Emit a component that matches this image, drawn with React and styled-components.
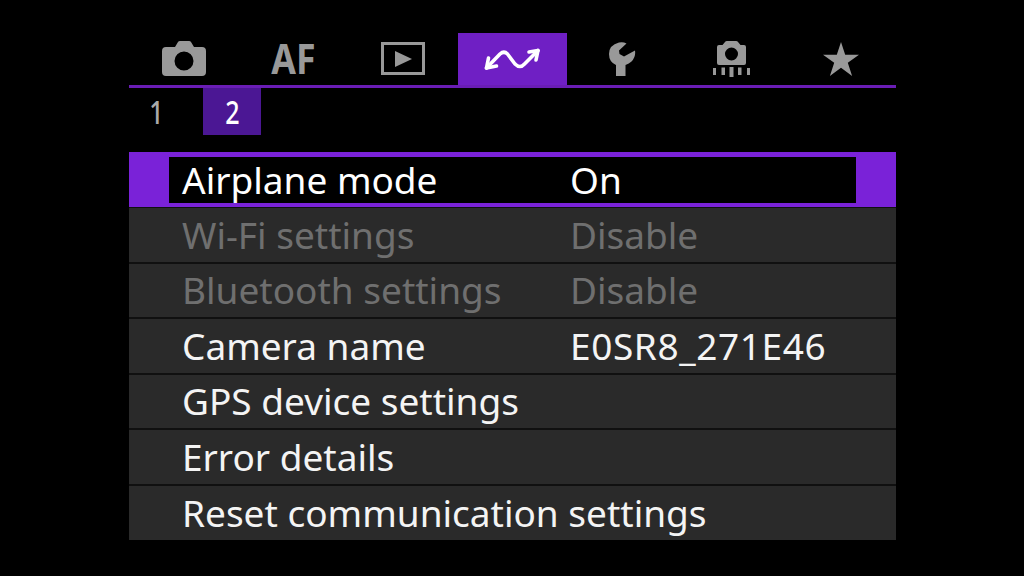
import React from 'react';
import styled, { createGlobalStyle } from 'styled-components';

const Global = createGlobalStyle`
  html, body { margin: 0; padding: 0; background: #000; }
`;

const Screen = styled.div`
  width: 1024px;
  height: 576px;
  overflow: hidden;
  background: #000;
  box-sizing: border-box;
  padding: 33px 128px 0 129px;
  font-family: "Noto Sans", sans-serif;
`;

const TabBar = styled.div`
  display: grid;
  grid-template-columns: repeat(7, 1fr);
  height: 55px;
  border-bottom: 3px solid #6a1db5;
  box-sizing: border-box;
`;

const Tab = styled.div`
  display: flex;
  align-items: flex-start;
  justify-content: center;
  height: 52px;
  background: ${p => (p.$active ? '#6f1fc4' : 'transparent')};
  color: ${p => (p.$active ? '#fff' : '#999')};
`;

const AfLabel = styled.span`
  display: block;
  font-weight: 700;
  font-size: 41px;
  line-height: 50px;
  transform: scaleX(0.87);
`;

const SubTabs = styled.div`
  display: flex;
  gap: 20px;
  height: 47px;
  margin-bottom: 17px;
`;

const SubTab = styled.div`
  width: ${p => p.$width}px;
  display: flex;
  align-items: center;
  justify-content: center;
  background: ${p => (p.$active ? '#4b1794' : 'transparent')};
  color: ${p => (p.$active ? '#fff' : '#aaa')};
  font-size: 33px;
  font-weight: 500;
`;

const Digit = styled.span`
  display: block;
  transform: scaleX(0.76);
  line-height: 47px;
`;

const List = styled.div`
  display: flex;
  flex-direction: column;
  background: #101010;
`;

const Row = styled.div`
  height: 53.5px;
  margin-bottom: 2px;
  background: #2a2a2a;
  box-sizing: border-box;
  padding-left: 53px;
  display: grid;
  grid-template-columns: 388px 1fr;
  align-items: center;
  color: ${p => (p.$disabled ? '#6f6f6f' : '#f4f4f4')};
  font-size: 37px;
  line-height: 50px;
  &:last-child {
    height: 54.5px;
    margin-bottom: 0;
  }
`;

const SelectedRow = styled.div`
  height: 55px;
  margin-bottom: 1px;
  background: #7a22d8;
  box-sizing: border-box;
  padding: 5px 40px 4px;
  display: flex;
`;

const SelectedInner = styled.div`
  flex: 1;
  background: #000;
  box-sizing: border-box;
  padding-left: 13px;
  display: grid;
  grid-template-columns: 388px 1fr;
  align-items: center;
  color: #fff;
  font-size: 37px;
  line-height: 46px;
`;

const Text = styled.span`
  white-space: nowrap;
  letter-spacing: ${p => (p.$wide ? '0.6px' : '0')};
`;

const Icon = styled.svg`
  display: block;
  margin-top: ${p => p.$top}px;
  fill: currentColor;
`;

const StrokeIcon = styled.svg`
  display: block;
  margin-top: ${p => p.$top}px;
  fill: none;
  stroke: currentColor;
  stroke-width: 3.6;
  stroke-linecap: round;
  stroke-linejoin: round;
`;

const CameraIcon = () => (
  <Icon $top={8} width="44" height="35" viewBox="0 0 44 35">
    <path fillRule="evenodd" d="M13 6 L16 1 Q16.500 0 18 0 H27 Q28.500 0 29 1 L32 6 H40 Q44 6 44 10 V31 Q44 35 40 35 H4 Q0 35 0 31 V10 Q0 6 4 6 Z M22 10.500 A9.500 9.500 0 1 0 22 29.500 A9.500 9.500 0 1 0 22 10.500 Z" />
  </Icon>
);

const PlayIcon = () => (
  <Icon $top={9} width="44" height="33" viewBox="0 0 44 33">
    <path fillRule="evenodd" d="M0 0 H44 V33 H0 Z M3 3 V30 H41 V3 Z" />
    <path d="M14 9 L31 17 L14 25 Z" />
  </Icon>
);

const CommIcon = () => (
  <StrokeIcon $top={14} width="56" height="24" viewBox="0 0 56 24">
    <path d="M2.500 21 L16 7 Q20 3.500 23.500 7 L31 17 Q36 22 40.500 17 L54 3.500" />
    <path d="M4.500 11 L2.500 21 L12.500 19" />
    <path d="M45 5 L54 3.500 L52 13" />
  </StrokeIcon>
);

const WrenchIcon = () => (
  <Icon $top={9} width="27" height="34" viewBox="0 0 27 34">
    <path d="M17.500 1.500 L10 8.500 L10.500 12 L15 14.500 L26 8.500 Q27 15 22.500 19.500 Q20 21.500 16.500 23 V34 H7 V23 Q0 20 0 12 Q0 3 10 0.500 Q14 -0.500 17.500 1.500 Z" />
  </Icon>
);

const SensorCleanIcon = () => (
  <Icon $top={8} width="37" height="36" viewBox="0 0 37 36">
    <path fillRule="evenodd" d="M9.500 4 L12 1 Q12.500 0 14 0 H23 Q24.500 0 25 1 L27.500 4 H31 Q33 4 33 6 V22 Q33 24 31 24 H6 Q4 24 4 22 V6 Q4 4 6 4 Z M18.500 6.500 A6.500 6.500 0 1 0 18.500 19.500 A6.500 6.500 0 1 0 18.500 6.500 Z" />
    <path d="M0 27 H3 V34 H0 Z M8.500 26.500 H12 V34 H8.500 Z M16.500 26 H20.500 V36 H16.500 Z M25 26.500 H28.500 V34 H25 Z M34 27 H37 V34 H34 Z" />
  </Icon>
);

const StarIcon = () => (
  <Icon $top={9} width="36" height="34" viewBox="0 0 36 34">
    <path d="M18 0 L22.200 12.700 H36 L24.800 20.800 L29.100 34 L18 25.800 L6.900 34 L11.200 20.800 L0 12.700 H13.800 Z" />
  </Icon>
);

const rows = [
  { label: 'Wi-Fi settings', value: 'Disable', disabled: true },
  { label: 'Bluetooth settings', value: 'Disable', disabled: true },
  { label: 'Camera name', value: 'E0SR8_271E46', wide: true },
  { label: 'GPS device settings' },
  { label: 'Error details' },
  { label: 'Reset communication settings' },
];

export default function App() {
  return (
    <Screen>
      <Global />
      <TabBar>
        <Tab><CameraIcon /></Tab>
        <Tab><AfLabel>AF</AfLabel></Tab>
        <Tab><PlayIcon /></Tab>
        <Tab $active><CommIcon /></Tab>
        <Tab><WrenchIcon /></Tab>
        <Tab><SensorCleanIcon /></Tab>
        <Tab><StarIcon /></Tab>
      </TabBar>
      <SubTabs>
        <SubTab $width={54}><Digit>1</Digit></SubTab>
        <SubTab $width={58} $active><Digit>2</Digit></SubTab>
      </SubTabs>
      <List>
        <SelectedRow>
          <SelectedInner>
            <Text>Airplane mode</Text>
            <Text>On</Text>
          </SelectedInner>
        </SelectedRow>
        {rows.map(r => (
          <Row key={r.label} $disabled={r.disabled}>
            <Text>{r.label}</Text>
            {r.value && <Text $wide={r.wide}>{r.value}</Text>}
          </Row>
        ))}
      </List>
    </Screen>
  );
}
